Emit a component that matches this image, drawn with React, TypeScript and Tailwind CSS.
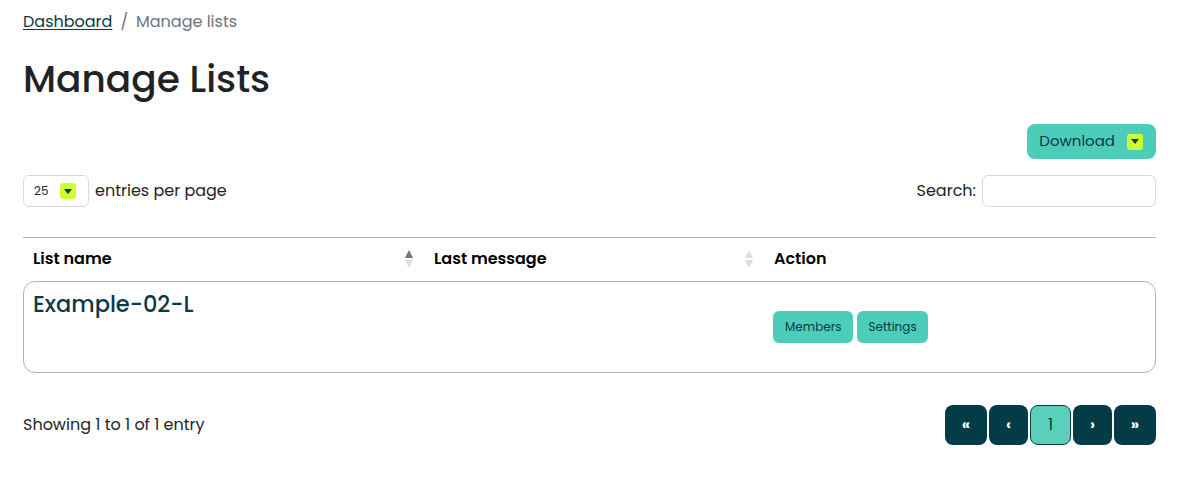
import { useState } from "react";

const rows = [{ name: "Example-02-L", lastMessage: "" }];

const pages = [
  { label: "«", w: "w-[42px]" },
  { label: "‹", w: "w-[39px]" },
  { label: "1", w: "w-[41px]" },
  { label: "›", w: "w-[39px]" },
  { label: "»", w: "w-[42px]" },
];

function Chevron() {
  return (
    <span className="inline-flex h-4 w-4 items-center justify-center rounded-[3px] bg-[#ccff33]">
      <svg width="8" height="5" viewBox="0 0 8 5">
        <path d="M0 0h8L4 5z" fill="#0b3a45" />
      </svg>
    </span>
  );
}

function SortIcon({ active }: { active: boolean }) {
  return (
    <svg width="10" height="18" viewBox="0 0 10 18">
      <path d="M5 0l4 8H1z" fill={active ? "#777" : "#ddd"} />
      <path d="M5 18l4-8H1z" fill="#ddd" />
    </svg>
  );
}

export default function App() {
  const [perPage] = useState(25);

  return (
    <div
      className="min-h-[478px] bg-white pl-[23px] pr-[48px] pt-[11px] text-[#212529]"
      style={{ fontFamily: "Poppins, Inter, 'Noto Sans', sans-serif" }}
    >
      {/* Breadcrumb */}
      <nav className="flex items-center gap-2 text-[16px] leading-[22px]">
        <a href="#" className="text-[#0b3a45] underline underline-offset-2">
          Dashboard
        </a>
        <span className="text-[#6c757d]">/</span>
        <span className="text-[#6c757d]">Manage lists</span>
      </nav>

      <h1 className="mt-[23px] text-[37.5px] leading-[46px] font-medium text-[#1f2328]">Manage Lists</h1>

      {/* Download */}
      <div className="mt-[22px] flex justify-end">
        <button className="flex h-[35px] items-center gap-[12px] rounded-[8px] bg-[#4ccdb9] pl-[12px] pr-[13px] text-[15px] text-[#0b3a45]">
          Download
          <Chevron />
        </button>
      </div>

      {/* Controls */}
      <div className="mt-[16px] flex items-center justify-between">
        <div className="flex items-center gap-[6px]">
          <div className="flex h-[32px] w-[66px] items-center gap-[12px] rounded-[6px] border border-[#d9d9d9] pl-[10px] text-[12px]">
            {perPage}
            <Chevron />
          </div>
          <span className="text-[16px] leading-[22px]">entries per page</span>
        </div>
        <div className="flex items-center gap-[6px]">
          <span className="text-[16px]">Search:</span>
          <input className="h-[32px] w-[174px] rounded-[6px] border border-[#d9d9d9] outline-none" />
        </div>
      </div>

      {/* Table */}
      <div className="mt-[30px] border-t border-[#b3b3b3]">
        <div className="grid h-[43px] grid-cols-[401px_340px_1fr] items-center pb-[2px] text-[16px] font-semibold text-black">
          <div className="flex items-center justify-between px-[10px]">
            List name
            <SortIcon active />
          </div>
          <div className="flex items-center justify-between px-[10px]">
            Last message
            <SortIcon active={false} />
          </div>
          <div className="px-[10px]">Action</div>
        </div>

        {rows.map((row) => (
          <div
            key={row.name}
            className="grid h-[92px] grid-cols-[401px_340px_1fr] rounded-[12px] border border-[#b3b3b3]"
          >
            <div className="px-[9px] pt-[8px] text-[22.5px] leading-[28px] font-medium text-[#0b3a45]">{row.name}</div>
            <div className="px-[10px]">{row.lastMessage}</div>
            <div className="flex items-center gap-[4px] px-[8px]">
              <button className="h-[32px] rounded-[6px] bg-[#4ccdb9] px-[12px] text-[12px] text-[#0b3a45]">
                Members
              </button>
              <button className="h-[32px] rounded-[6px] bg-[#4ccdb9] px-[11px] text-[12px] text-[#0b3a45]">
                Settings
              </button>
            </div>
          </div>
        ))}
      </div>

      {/* Footer */}
      <div className="mt-[32px] flex items-center justify-between">
        <span className="text-[16px]">Showing 1 to 1 of 1 entry</span>
        <div className="flex gap-[2px]">
          {pages.map((p) =>
            p.label === "1" ? (
              <button
                key={p.label}
                className="h-[40px] w-[41px] rounded-[8px] border border-[#0b3a45] bg-[#5bcfbb] text-[16px] text-[#0b3a45]"
              >
                {p.label}
              </button>
            ) : (
              <button
                key={p.label}
                className={`h-[40px] ${p.w} rounded-[8px] bg-[#033b46] text-[15px] font-bold text-white`}
              >
                {p.label}
              </button>
            )
          )}
        </div>
      </div>
    </div>
  );
}
